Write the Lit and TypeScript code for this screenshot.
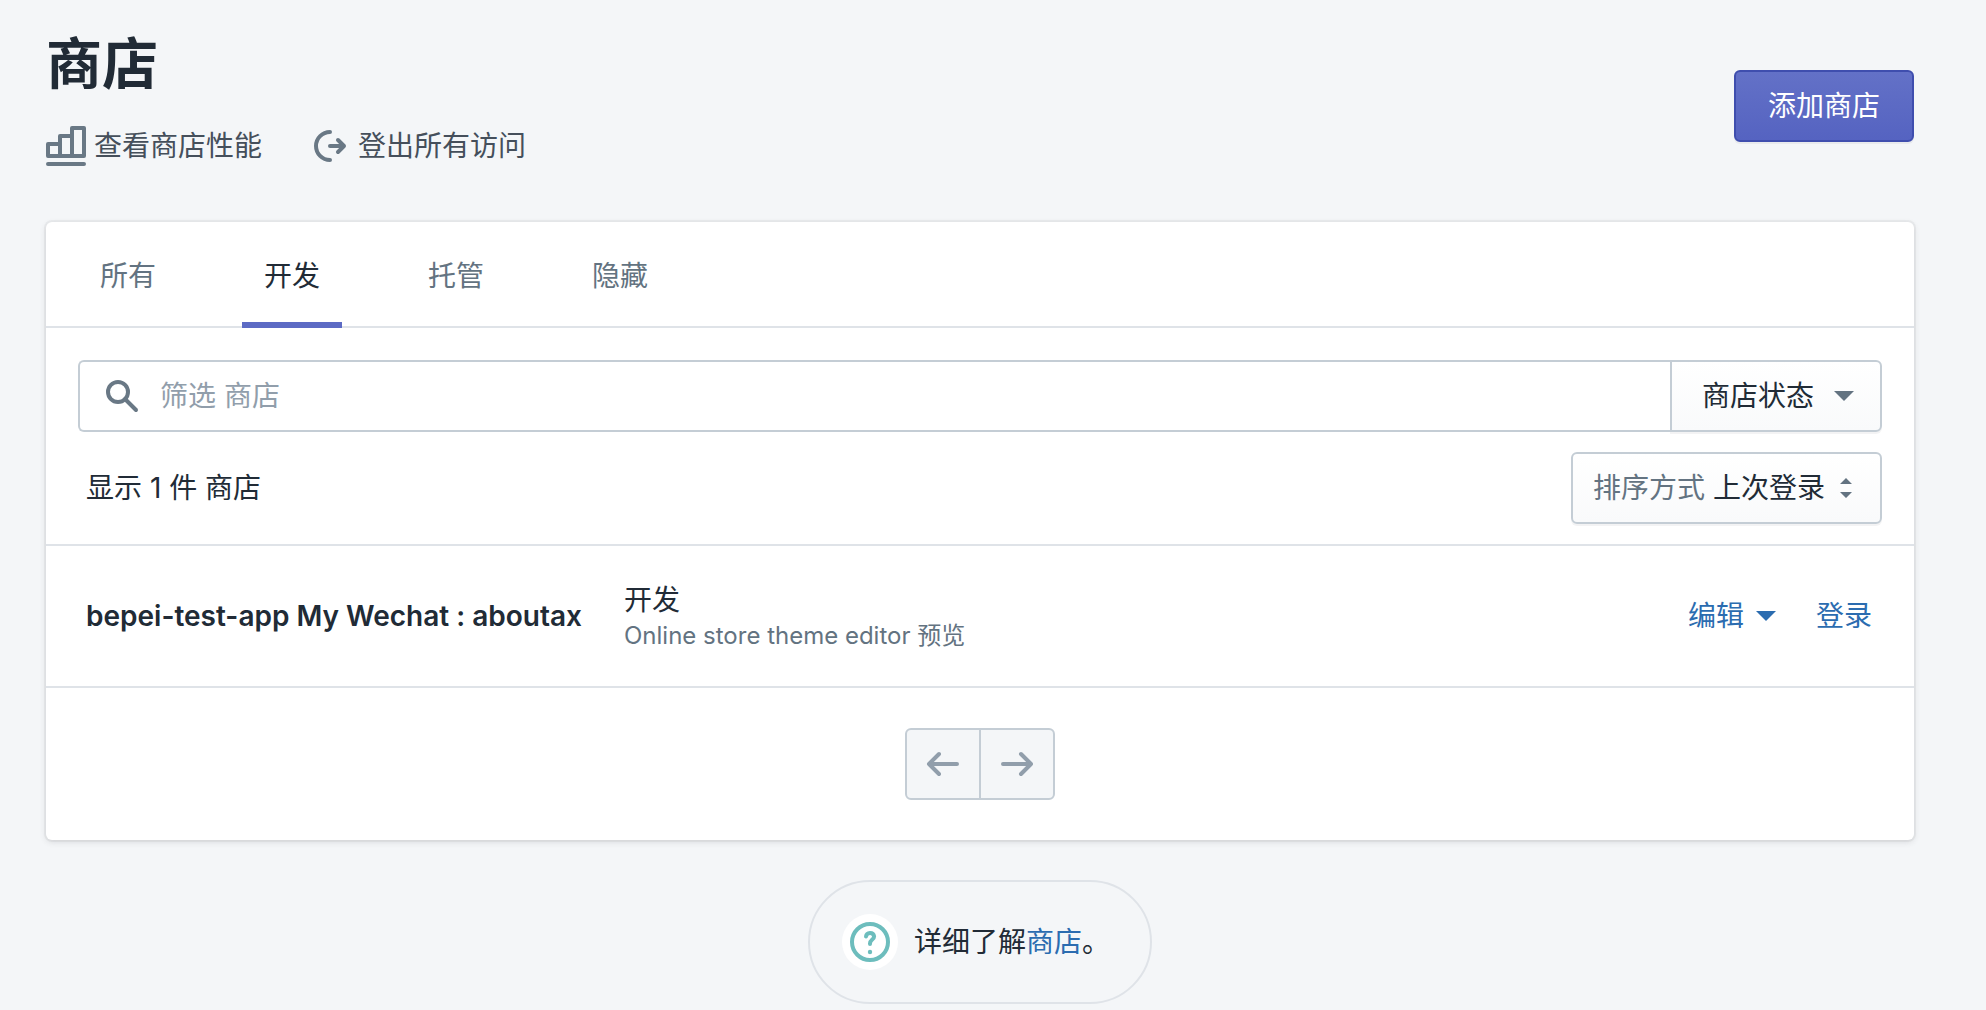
import { LitElement, html, css } from "lit";
import { customElement, state } from "lit/decorators.js";
import { classMap } from "lit/directives/class-map.js";

interface Store {
  name: string;
  type: string;
  detail: string;
}

const TABS = ["所有", "开发", "托管", "隐藏"];

const STORES: Store[] = [
  {
    name: "bepei-test-app My Wechat : aboutax",
    type: "开发",
    detail: "Online store theme editor 预览",
  },
];

const chartIcon = html`<svg class="icon" viewBox="0 0 40 40" aria-hidden="true">
  <path d="M2 30V18H14V30ZM14 30V10H26V30ZM26 30V2H38V30ZM2 38H38" />
</svg>`;

const logoutIcon = html`<svg class="icon" viewBox="0 0 40 40" aria-hidden="true">
  <path d="M20 6A14 14 0 0 0 20 34M20 20H34M28 14L34 20L28 26" />
</svg>`;

const searchIcon = html`<svg class="icon" viewBox="0 0 40 40" aria-hidden="true">
  <circle cx="16" cy="16" r="10" />
  <path d="M23 23L34 34" />
</svg>`;

const caretIcon = html`<svg class="caret" viewBox="0 0 20 10" aria-hidden="true">
  <path d="M0 0H20L10 10Z" />
</svg>`;

const sortIcon = html`<svg class="sort-icon" viewBox="0 0 12 20" aria-hidden="true">
  <path d="M6 0L12 6H0ZM6 20L0 14H12Z" />
</svg>`;

const previousIcon = html`<svg class="icon" viewBox="0 0 40 40" aria-hidden="true">
  <path d="M34 20H6M16 10L6 20L16 30" />
</svg>`;

const nextIcon = html`<svg class="icon" viewBox="0 0 40 40" aria-hidden="true">
  <path d="M6 20H34M24 10L34 20L24 30" />
</svg>`;

const helpIcon = html`<svg class="icon" viewBox="0 0 40 40" aria-hidden="true">
  <circle cx="20" cy="20" r="18" />
  <path d="M16 14.6A4.1 4.1 0 0 1 24.1 14.4C24.1 17.6 20 17.4 20 21.6V22" />
  <circle class="dot" cx="20" cy="30" r="2.2" />
</svg>`;

@customElement("app-root")
export class AppRoot extends LitElement {
  @state() private activeTab = 1;

  static styles = css`
    :host {
      display: block;
      box-sizing: border-box;
      min-height: 100vh;
      padding: 36px 72px 6px 46px;
      background: #f4f6f8;
      color: #212b36;
      font-family: Inter, "Noto Sans CJK SC", sans-serif;
      font-size: 28px;
      line-height: 40px;
    }
    * {
      box-sizing: border-box;
    }
    button,
    input,
    select {
      margin: 0;
      padding: 0;
      border: 0;
      background: none;
      color: inherit;
      font: inherit;
    }
    button,
    select {
      cursor: pointer;
    }
    a {
      color: #2b6cb0;
      text-decoration: none;
    }
    .icon {
      display: block;
      flex: none;
      width: 40px;
      height: 40px;
      overflow: visible;
      fill: none;
      stroke: currentColor;
      stroke-width: 4;
      stroke-linecap: round;
      stroke-linejoin: round;
      color: #697885;
    }
    .caret {
      flex: none;
      width: 20px;
      height: 10px;
      fill: #637381;
    }
    .header {
      display: flex;
      align-items: center;
      justify-content: space-between;
      margin-bottom: 56px;
    }
    .title {
      margin: 0 0 34px;
      font-size: 56px;
      font-weight: 600;
      line-height: 56px;
    }
    .actions {
      display: flex;
      gap: 48px;
    }
    .action {
      display: flex;
      align-items: center;
      gap: 8px;
      color: #454f5b;
    }
    .primary {
      height: 72px;
      margin-top: 10px;
      padding: 0 32px;
      border: 2px solid #3f4eae;
      border-radius: 6px;
      background: linear-gradient(#6371c7, #5563c1);
      box-shadow: 0 2px 0 rgba(22, 29, 37, 0.05);
      color: #fff;
    }
    .card {
      border-radius: 6px;
      background: #fff;
      box-shadow: 0 0 0 2px rgba(63, 63, 68, 0.05), 0 2px 6px rgba(63, 63, 68, 0.15);
    }
    .tabs {
      display: flex;
      border-bottom: 2px solid #dfe3e8;
    }
    .tab {
      margin-bottom: -2px;
      padding: 0 32px;
      color: #637381;
    }
    .tab-label {
      display: block;
      padding: 34px 22px 26px;
      border-bottom: 6px solid transparent;
    }
    .tab.active {
      color: #212b36;
    }
    .tab.active .tab-label {
      border-color: #5c6ac4;
    }
    .filters {
      display: flex;
      padding: 32px 32px 20px;
    }
    .search {
      display: flex;
      flex: 1;
      align-items: center;
      gap: 18px;
      height: 72px;
      padding-left: 22px;
      border: 2px solid #c4cdd5;
      border-right: 0;
      border-radius: 6px 0 0 6px;
    }
    .search-input {
      flex: 1;
      min-width: 0;
      height: 100%;
      outline: 0;
    }
    .search-input::placeholder {
      color: #919eab;
      opacity: 1;
    }
    .status,
    .sort {
      display: flex;
      align-items: center;
      height: 72px;
      border: 2px solid #c4cdd5;
      background: linear-gradient(#fff, #f9fafb);
      box-shadow: 0 2px 0 rgba(22, 29, 37, 0.05);
    }
    .status {
      gap: 20px;
      padding: 0 26px 0 30px;
      border-radius: 0 6px 6px 0;
    }
    .summary {
      display: flex;
      align-items: center;
      justify-content: space-between;
      padding: 0 32px 20px 40px;
      border-bottom: 2px solid #dfe3e8;
    }
    .sort {
      gap: 8px;
      padding: 0 28px 0 20px;
      border-radius: 6px;
    }
    .sort-label {
      color: #637381;
    }
    .sort-select {
      appearance: none;
      height: 68px;
      outline: 0;
    }
    .sort-icon {
      width: 12px;
      height: 20px;
      margin-left: 6px;
      fill: #637381;
    }
    .stores {
      margin: 0;
      padding: 0;
      list-style: none;
    }
    .store {
      display: flex;
      align-items: center;
      gap: 42px;
      height: 142px;
      padding: 0 42px 0 40px;
      border-bottom: 2px solid #dfe3e8;
    }
    .store-name {
      margin: 0;
      font-size: 28px;
      font-weight: 600;
    }
    .store-info {
      flex: 1;
    }
    .store-type,
    .store-detail {
      margin: 0;
    }
    .store-detail {
      color: #637381;
      font-size: 24px;
      line-height: 32px;
    }
    .store-actions {
      display: flex;
      gap: 40px;
    }
    .edit {
      display: flex;
      align-items: center;
      gap: 12px;
      color: #2b6cb0;
    }
    .edit .caret {
      fill: currentColor;
    }
    .pagination {
      display: flex;
      justify-content: center;
      padding: 40px;
    }
    .page {
      display: grid;
      place-items: center;
      width: 76px;
      height: 72px;
      border: 2px solid #c4cdd5;
      border-radius: 6px 0 0 6px;
      background: #f4f6f8;
    }
    .page + .page {
      margin-left: -2px;
      border-radius: 0 6px 6px 0;
    }
    .page .icon {
      color: #919eab;
    }
    .footer {
      display: flex;
      justify-content: center;
      margin-top: 40px;
    }
    .help {
      display: flex;
      align-items: center;
      gap: 16px;
      height: 124px;
      padding: 0 40px 0 32px;
      border: 2px solid #dfe3e8;
      border-radius: 62px;
    }
    .help-badge {
      padding: 8px;
      border-radius: 50%;
      background: #fff;
    }
    .help-badge .icon {
      color: #6dbdbd;
    }
    .help-badge .dot {
      fill: currentColor;
      stroke: none;
    }
    .help-text {
      margin: 0;
    }
  `;

  private renderStore(store: Store) {
    return html`<li class="store">
      <h2 class="store-name">${store.name}</h2>
      <div class="store-info">
        <p class="store-type">${store.type}</p>
        <p class="store-detail">${store.detail}</p>
      </div>
      <div class="store-actions">
        <button class="edit" type="button" aria-haspopup="true">编辑${caretIcon}</button>
        <a href="#login">登录</a>
      </div>
    </li>`;
  }

  render() {
    return html`
      <header class="header">
        <div>
          <h1 class="title">商店</h1>
          <div class="actions">
            <button class="action" type="button">${chartIcon}<span>查看商店性能</span></button>
            <button class="action" type="button">${logoutIcon}<span>登出所有访问</span></button>
          </div>
        </div>
        <button class="primary" type="button">添加商店</button>
      </header>
      <main class="card">
        <div class="tabs" role="tablist">
          ${TABS.map(
            (tab, i) => html`<button
              class=${classMap({ tab: true, active: i === this.activeTab })}
              type="button"
              role="tab"
              aria-selected=${i === this.activeTab ? "true" : "false"}
              @click=${() => (this.activeTab = i)}
            ><span class="tab-label">${tab}</span></button>`
          )}
        </div>
        <div class="filters">
          <label class="search">
            ${searchIcon}
            <input class="search-input" type="text" placeholder="筛选 商店" aria-label="筛选 商店" />
          </label>
          <button class="status" type="button" aria-haspopup="true">商店状态${caretIcon}</button>
        </div>
        <div class="summary">
          <span>显示 ${STORES.length} 件 商店</span>
          <div class="sort">
            <label class="sort-label" for="sort">排序方式</label>
            <select class="sort-select" id="sort">
              <option>上次登录</option>
            </select>
            ${sortIcon}
          </div>
        </div>
        <ul class="stores">
          ${STORES.map((store) => this.renderStore(store))}
        </ul>
        <nav class="pagination" aria-label="分页">
          <button class="page" type="button" aria-label="上一页" disabled>${previousIcon}</button>
          <button class="page" type="button" aria-label="下一页" disabled>${nextIcon}</button>
        </nav>
      </main>
      <footer class="footer">
        <div class="help">
          <span class="help-badge">${helpIcon}</span>
          <p class="help-text">详细了解<a href="#stores">商店</a>。</p>
        </div>
      </footer>
    `;
  }
}
